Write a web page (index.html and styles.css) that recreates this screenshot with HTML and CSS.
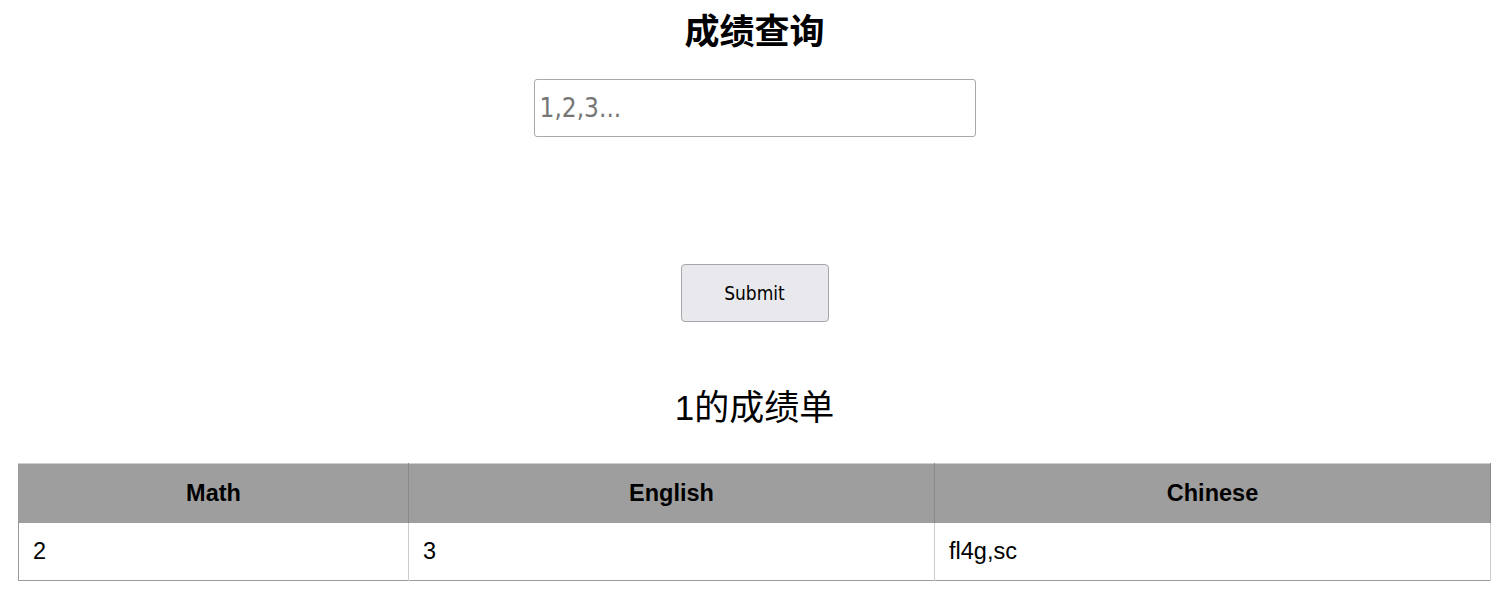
FILE: index.html
```html
<!DOCTYPE html>
<html lang="zh">
<head>
<meta charset="utf-8">
<title>成绩查询</title>
<link rel="stylesheet" href="styles.css">
</head>
<body>
<main class="page">
  <h1 class="title">成绩查询</h1>
  <form class="query">
    <input class="query-input" type="text" placeholder="1,2,3...">
    <button class="query-btn" type="button">Submit</button>
  </form>
  <h2 class="subtitle">1的成绩单</h2>
  <table class="scores">
    <thead>
      <tr><th class="c-math">Math</th><th class="c-eng">English</th><th class="c-chn">Chinese</th></tr>
    </thead>
    <tbody>
      <tr><td>2</td><td>3</td><td>fl4g,sc</td></tr>
    </tbody>
  </table>
</main>
</body>
</html>
```

FILE: styles.css
```css
html, body {
  margin: 0;
  padding: 0;
  background: #ffffff;
}
body {
  padding: 4px 6px 0 18px;
  font-family: "Liberation Sans", "Noto Sans CJK SC", sans-serif;
  color: #000;
}
.page {
  display: flex;
  flex-direction: column;
  align-items: center;
}
.title {
  margin: 0;
  font-family: "Noto Sans CJK SC", sans-serif;
  font-size: 35px;
  line-height: 50px;
  font-weight: 700;
}
.query {
  display: flex;
  flex-direction: column;
  align-items: center;
  margin-top: 25px;
}
.query-input {
  box-sizing: border-box;
  width: 442px;
  height: 58px;
  border: 1px solid #a9a9b0;
  border-radius: 3px;
  padding: 0 5px;
  font-family: "DejaVu Sans Condensed", "DejaVu Sans", sans-serif;
  font-size: 26px;
  color: #000;
  outline: none;
}
.query-input::placeholder {
  color: #767676;
}
.query-btn {
  box-sizing: border-box;
  margin-top: 127px;
  width: 148px;
  height: 58px;
  border: 1px solid #a6a6ad;
  border-radius: 4px;
  background: #e9e9ed;
  font-family: "DejaVu Sans Condensed", "DejaVu Sans", sans-serif;
  font-size: 19px;
  color: #000;
  padding: 0;
}
.subtitle {
  margin: 62px 0 0;
  font-family: "Liberation Sans", "Noto Sans CJK SC", sans-serif;
  font-size: 35px;
  line-height: 48px;
  font-weight: 400;
}
.scores {
  margin-top: 31px;
  width: 100%;
  border-collapse: collapse;
  border-left: 1px solid #9a9a9a;
  border-right: 1px solid #9a9a9a;
  border-bottom: 1px solid #9a9a9a;
  font-size: 23.5px;
}
.scores th {
  background: #9e9e9e;
  font-weight: 700;
  height: 59px;
  padding: 0 14px;
  text-align: center;
  border-top: 1px solid #cfcfcf;
  border-right: 1px solid #8a8a8a;
}
.scores td {
  height: 57px;
  padding: 0 14px;
  text-align: left;
  border-right: 1px solid #cccccc;
}
.c-math { width: 361px; }
.c-eng { width: 497px; }
```
